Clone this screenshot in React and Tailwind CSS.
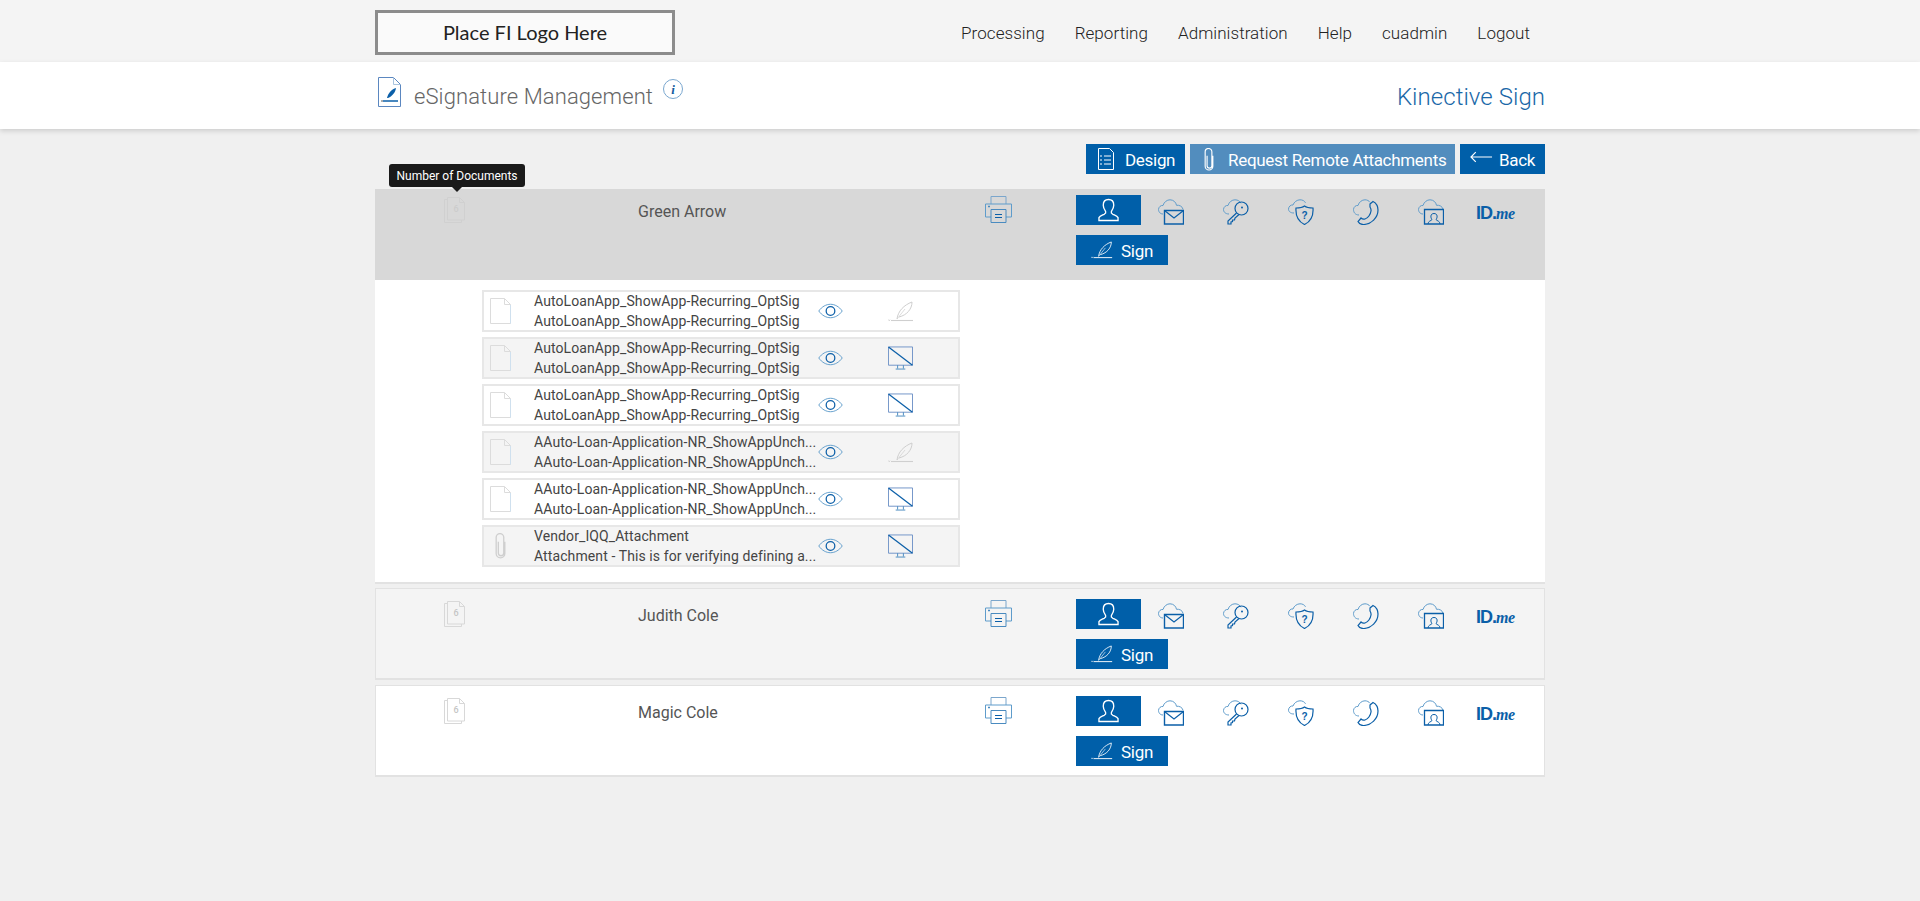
const blue = "#0b5fa8";
const cloud = "#5f9ccb";

const PageIcon = ({ className = "w-[23px] h-[30px]" }) => (
    <svg viewBox="0 0 23 30" className={className} fill="none">
        <path d="M.5.5h15l7 7v22H.5z" stroke="#5b87c0" />
        <path d="M15.5.5v7h7" stroke="#a9c4df" />
        <path d="M9 21c1-5 5-9 9-10-.5 4-3.500 8-8 10z" fill={blue} />
        <path d="M5 24h15" stroke={blue} strokeWidth="1.500" />
        <path d="M3 23l2 2m0-2l-2 2" stroke="#777" strokeWidth=".6" />
    </svg>
);

const InfoIcon = () => (
    <svg viewBox="0 0 20 20" className="w-5 h-5" fill="none">
        <circle cx="10" cy="10" r="9.500" stroke="#7aa7cf" />
        <text x="10" y="15" textAnchor="middle" fontFamily="Liberation Serif, serif" fontStyle="italic" fontWeight="700" fontSize="13" fill="#145c9e">i</text>
    </svg>
);

const DesignIcon = () => (
    <svg viewBox="0 0 16 22" className="w-4 h-[22px]" fill="none" stroke="#fff">
        <path d="M.5.500h11l4 4v17H.5z" />
        <path d="M6 8h7M6 12h7M6 16h7" />
        <path d="M2 8h2M2 12h2M2 16h2" />
    </svg>
);

const ClipIcon = ({ color = "#fff", className = "w-[10px] h-[23px]" }) => (
    <svg viewBox="0 0 10 24" className={className} fill="none" stroke={color} strokeWidth="1.200">
        <path d="M3 8v10.500a2.500 2.500 0 0 0 5 0V4a3.500 3.500 0 0 0-7 0v15a4 4 0 0 0 8 0V8" />
    </svg>
);

const ArrowIcon = () => (
    <svg viewBox="0 0 24 12" className="w-[23px] h-3 -mt-[5px]" fill="none" stroke="#fff" strokeWidth="1.200">
        <path d="M23 6H1M6 1L1 6l5 5" />
    </svg>
);

const PrinterIcon = () => (
    <svg viewBox="0 0 27 27" className="w-[27px] h-[27px]" fill="none">
        <path d="M6 8V.5h15V8" stroke="#7ba6cc" />
        <path d="M6 21H.5V8h26v13H21" stroke="#5f9ccb" />
        <path d="M6 13.500h15v13H6z" stroke="#4a8bc0" fill="none" />
        <path d="M10 18.500h7M10 21.500h7" stroke={blue} strokeWidth="1.200" />
        <path d="M3 10.500h2" stroke="#4a8bc0" strokeWidth="1.500" />
    </svg>
);

const PersonIcon = () => (
    <svg viewBox="0 0 22 24" className="w-[21px] h-[24px]" fill="none" stroke="#fff" strokeWidth="1.400">
        <path d="M11 1c3.500 0 5.500 2.500 5.500 6 0 3-1.500 5-2.500 6.500-.5 1 0 2 1.500 3 2 1 4.500 1.500 5.500 3.500v3H1v-3c1-2 3.500-2.500 5.500-3.500 1.500-1 2-2 1.500-3C7 12 5.500 10 5.500 7 5.500 3.500 7.500 1 11 1z" />
    </svg>
);

const FeatherIcon = ({ color = "#fff", className = "w-[22px] h-[18px]" }) => (
    <svg viewBox="0 0 26 21" className={className} fill="none" stroke={color}>
        <path d="M9 18C10 10 16 4 24 1c0 7-5 13-13 15" />
        <path d="M9 18l8-10" strokeWidth=".7" />
        <path d="M3 19.500h22" strokeWidth="1.100" />
        <path d="M.5 18.500l1.500 1.500m0-1.500l-1.500 1.500" strokeWidth=".7" />
    </svg>
);

const CloudPath = ({ d }) => <path d={d} stroke={cloud} />;

const MailCloud = () => (
    <svg viewBox="0 0 26 26" className="w-[26px] h-[26px]" fill="none">
        <CloudPath d="M5 15C1.500 15 .5 12 .5 10.500 .5 8 3 6 5 6.500 6 3 9 .8 12 .8c3.500 0 6 2.500 6.500 5.500 2.500-.5 6 1 6.500 4" />
        <path d="M6.500 11.500h19v13.500h-19z" stroke={blue} strokeWidth="1.400" fill="none" />
        <path d="M6.500 11.500l9.500 7.500 9.500-7.500" stroke={blue} strokeWidth="1.200" />
    </svg>
);

const KeyCloud = () => (
    <svg viewBox="0 0 26 26" className="w-[26px] h-[26px]" fill="none">
        <CloudPath d="M6 15C2 15 .5 12.500 .5 10.500 .5 8 3 6 5 6.500 6 3 9 .8 12 .8c3 0 5 1.500 6 3.500" />
        <circle cx="18.500" cy="9.500" r="6.500" stroke={blue} strokeWidth="1.200" />
        <circle cx="19" cy="8.500" r="1" fill={blue} />
        <path d="M13.500 14L5 22v3h3v-2l1.500-.5V21h2l.5-2 4-3.500" stroke={blue} strokeWidth="1.200" />
    </svg>
);

const ShieldCloud = () => (
    <svg viewBox="0 0 26 26" className="w-[26px] h-[26px]" fill="none">
        <CloudPath d="M6 14C2 14 .5 12 .5 10 .5 7.500 3 5.500 5 6 6 3 9 .8 12 .8c2.500 0 4.500 1 5.500 3" />
        <path d="M16.500 7c2 1.500 5 2 8.500 2 .5 7-1.500 13-8.500 16.500C9.500 22 7.500 16 8 9c3.500 0 6.500-.5 8.500-2z" stroke={blue} strokeWidth="1.200" />
        <text x="16.500" y="20" textAnchor="middle" fontFamily="Liberation Sans, sans-serif" fontWeight="700" fontSize="10" fill={blue}>?</text>
    </svg>
);

const PhoneCloud = () => (
    <svg viewBox="0 0 26 26" className="w-[26px] h-[26px]" fill="none">
        <CloudPath d="M6 16C2 16 .5 13 .5 10.500 .5 8 3 6 5 6.500 6 3 9 .8 12 .8c2 0 4 1 5 2.500" />
        <path d="M17 5l3-2.500c3 1.500 5 5 5 8.500 0 8-7 14-14 14.500-3 .2-5-1-6-3l3-3.500c1 1 2.500 1.500 4 1 3-.8 5.500-4.500 6-8 .2-1.500-.3-3-1-4z" stroke={blue} strokeWidth="1.200" />
    </svg>
);

const VideoCloud = () => (
    <svg viewBox="0 0 26 26" className="w-[26px] h-[26px]" fill="none">
        <CloudPath d="M5 15C1.500 15 .5 12 .5 10.500 .5 8 3 6 5 6.500 6 3 9 .8 12 .8c3.500 0 6 2.500 6.500 5.500 2.500-.5 6 1 6.500 4" />
        <path d="M6.500 10.500h19v14.500h-19z" stroke={blue} strokeWidth="1.300" fill="none" />
        <path d="M10 25c0-3 3-3 4-4.500-1.500-1.500-2-6 2-6s3.500 4.500 2 6c1 1.500 4 1.500 4 4.500" stroke={blue} />
    </svg>
);

const IdMe = () => (
    <span className="flex items-baseline text-[#0b5fa8] leading-none">
        <span className="font-['Liberation_Sans',sans-serif] font-bold text-[18px] tracking-[-1px]">ID.</span>
        <span className="font-['Liberation_Serif',serif] italic text-[16px] font-bold tracking-[-0.5px]">me</span>
    </span>
);

const CountIcon = ({ faint }) => (
    <svg viewBox="0 0 21 26" className="w-[21px] h-[26px]" fill="none" stroke={faint ? "#d0d0d0" : "#d8d8d8"}>
        <path d="M3.500 2.500H.5v23h17V23" />
        <path d="M3.500.5h12l5 5v17.500h-17z" />
        <path d="M15.500.5v5h5" />
        <text x="12" y="15" textAnchor="middle" fontFamily="Roboto, sans-serif" fontWeight="500" fontSize="9" stroke="none" fill={faint ? "#cccccc" : "#c4c4c4"}>6</text>
    </svg>
);

const DocIcon = () => (
    <svg viewBox="0 0 21 26" className="w-[21px] h-[26px]" fill="none">
        <path d="M.5.500h14l6 6v19H.5z" stroke="#dcdcdc" />
        <path d="M20.500 7v18.500" stroke="#cfe0ee" />
        <path d="M14.500.5v6h6" stroke="#dcdcdc" />
    </svg>
);

const EyeIcon = () => (
    <svg viewBox="0 0 26 16" className="w-[25px] h-4" fill="none">
        <path d="M.8 8C4 3.500 8.500 1 13 1s9 2.500 12.200 7C22 12.500 17.500 15 13 15S4 12.500.8 8z" stroke="#5f9ccb" />
        <circle cx="13" cy="8" r="4.500" stroke={blue} strokeWidth="1.300" />
    </svg>
);

const ScreenIcon = () => (
    <svg viewBox="0 0 26 24" className="w-[25px] h-[24px]" fill="none">
        <path d="M.5.500h25v19H.5z" stroke="#6f93c7" />
        <path d="M.5.500l25 19" stroke={blue} strokeWidth="1.300" />
        <path d="M10 19.500v3.500M16 19.500v3.500M8 23.500h10" stroke="#4a8bc0" />
    </svg>
);

const topNav = ["Processing", "Reporting", "Administration", "Help", "cuadmin", "Logout"];

const docs = [
    { a: "AutoLoanApp_ShowApp-Recurring_OptSig", b: "AutoLoanApp_ShowApp-Recurring_OptSig", sign: true },
    { a: "AutoLoanApp_ShowApp-Recurring_OptSig", b: "AutoLoanApp_ShowApp-Recurring_OptSig", alt: true },
    { a: "AutoLoanApp_ShowApp-Recurring_OptSig", b: "AutoLoanApp_ShowApp-Recurring_OptSig" },
    { a: "AAuto-Loan-Application-NR_ShowAppUnch...", b: "AAuto-Loan-Application-NR_ShowAppUnch...", alt: true, sign: true },
    { a: "AAuto-Loan-Application-NR_ShowAppUnch...", b: "AAuto-Loan-Application-NR_ShowAppUnch..." },
    { a: "Vendor_IQQ_Attachment", b: "Attachment - This is for verifying defining a...", alt: true, clip: true },
];

const BlueBtn = ({ className = "", children }) => (
    <div className={`h-[30px] flex items-center text-white text-[17px] tracking-[-0.3px] ${className}`}>
        {children}
    </div>
);

const SignerHead = ({ name, faint }) => (
    <div className={`grid grid-cols-[263px_347px_91px_1fr] ${faint ? "" : "pt-[5px]"}`}>
        <div className="pl-[69px] pt-[8px]">
            <CountIcon faint={faint} />
        </div>
        <div className="pt-[12px] text-[16px] leading-[22px] text-[#555]">{name}</div>
        <div className="pt-[7px]">
            <PrinterIcon />
        </div>
        <div className="pt-[6px]">
            <div className="flex h-[30px] items-center">
                <BlueBtn className="w-[65px] justify-center bg-[#005fa9]">
                    <PersonIcon />
                </BlueBtn>
                <div className="w-[17px]" />
                {[MailCloud, KeyCloud, ShieldCloud, PhoneCloud, VideoCloud].map((Icon, i) => (
                    <div key={i} className="w-[65px] pt-[3px]">
                        <Icon />
                    </div>
                ))}
                <div className="pt-[5px] -ml-[7px]">
                    <IdMe />
                </div>
            </div>
            <BlueBtn className="mt-[10px] w-[92px] justify-center gap-[8px] bg-[#005fa9]">
                <FeatherIcon />
                <span className="pt-[3px]">Sign</span>
            </BlueBtn>
        </div>
    </div>
);

const DocRow = ({ doc }) => (
    <div
        className={`flex h-[42px] w-[478px] items-center border-2 border-[#e7e7e7] ${
            doc.alt ? "bg-[#f4f4f4]" : "bg-white"
        }`}
    >
        <div className="w-[50px] pl-[6px] flex">
            {doc.clip ? (
                <div className="pl-[5px]">
                    <ClipIcon color="#cfcfcf" className="w-[11px] h-[26px]" />
                </div>
            ) : (
                <DocIcon />
            )}
        </div>
        <div className="w-[282px] text-[14px] leading-[20px] tracking-[0.1px] whitespace-nowrap text-[#444]">
            <div>{doc.a}</div>
            <div>{doc.b}</div>
        </div>
        <div className="w-[72px] pl-[2px] flex">
            <EyeIcon />
        </div>
        <div className="flex">
            {doc.sign ? (
                <FeatherIcon color="#cfcfcf" className="w-[26px] h-[21px]" />
            ) : (
                <ScreenIcon />
            )}
        </div>
    </div>
);

export default function App() {
    return (
        <div className="min-h-[901px] bg-[#f0f0f0] font-['Roboto',sans-serif]">
            <div className="h-[62px] bg-[#f4f4f4]">
                <div className="w-[1170px] mx-auto flex justify-between pt-[10px]">
                    <div className="w-[300px] h-[45px] pb-[2px] border-[3px] border-[#8c8c8c] bg-[#fafafa] flex items-center justify-center text-[20px] text-[#222] font-['Lato',sans-serif] font-normal">
                        Place FI Logo Here
                    </div>
                    <div className="flex gap-[30px] pr-[15px] pt-[12px] text-[17px] leading-[22px] tracking-[0.06px] font-light text-[#222]">
                        {topNav.map((item) => (
                            <span key={item}>{item}</span>
                        ))}
                    </div>
                </div>
            </div>

            <div className="h-[67px] bg-white shadow-[0_2px_5px_rgba(0,0,0,0.15)]">
                <div className="relative w-[1170px] mx-auto flex justify-between pt-[15px]">
                    <div className="flex items-start pl-[3px]">
                        <PageIcon />
                        <span className="ml-[13px] mt-[5px] text-[22px] leading-[30px] tracking-[0.1px] font-light text-[#666]">
                            eSignature Management
                        </span>
                        <span className="ml-[10px] mt-[2px]">
                            <InfoIcon />
                        </span>
                    </div>
                    <span className="mt-[5px] text-[24px] leading-[30px] tracking-[0.05px] font-light text-[#1a68a8]">
                        Kinective Sign
                    </span>
                </div>
            </div>

            <div className="w-[1170px] mx-auto">
                <div className="flex justify-end gap-[5px] pt-[15px]">
                    <BlueBtn className="w-[99px] bg-[#005fa9] pl-[12px] gap-[11px]">
                        <DesignIcon />
                        <span className="pt-[3px]">Design</span>
                    </BlueBtn>
                    <BlueBtn className="w-[265px] bg-[#528dbe] pl-[14px] gap-[14px]">
                        <ClipIcon />
                        <span className="pt-[3px]">Request Remote Attachments</span>
                    </BlueBtn>
                    <BlueBtn className="w-[85px] bg-[#005fa9] pl-[10px] gap-[6px]">
                        <ArrowIcon />
                        <span className="pt-[3px]">Back</span>
                    </BlueBtn>
                </div>

                <div className="relative mt-[15px] bg-white border-b-2 border-[#e2e2e2]">
                    <div className="absolute left-[14px] -top-[25px] z-10 w-[136px] h-[23px] rounded-[3px] bg-[#1a1a1a] flex items-center justify-center text-[12px] text-white">
                        Number of Documents
                        <div className="absolute left-[63px] top-[23px] w-0 h-0 border-x-[5px] border-t-[5px] border-x-transparent border-t-[#1a1a1a]" />
                    </div>
                    <div className="bg-[#d8d8d8] h-[91px]">
                        <SignerHead name="Green Arrow" faint />
                    </div>
                    <div className="flex flex-col gap-[5px] pl-[107px] pt-[10px] pb-[15px]">
                        {docs.map((doc, i) => (
                            <DocRow key={i} doc={doc} />
                        ))}
                    </div>
                </div>

                <div className="mt-[4px] h-[92px] bg-[#f4f4f4] shadow-[inset_0_0_0_1px_#e2e2e2,inset_0_-2px_0_#e2e2e2]">
                    <SignerHead name="Judith Cole" />
                </div>
                <div className="mt-[5px] h-[92px] bg-white shadow-[inset_0_0_0_1px_#e2e2e2,inset_0_-2px_0_#e2e2e2]">
                    <SignerHead name="Magic Cole" />
                </div>
            </div>
        </div>
    );
}
